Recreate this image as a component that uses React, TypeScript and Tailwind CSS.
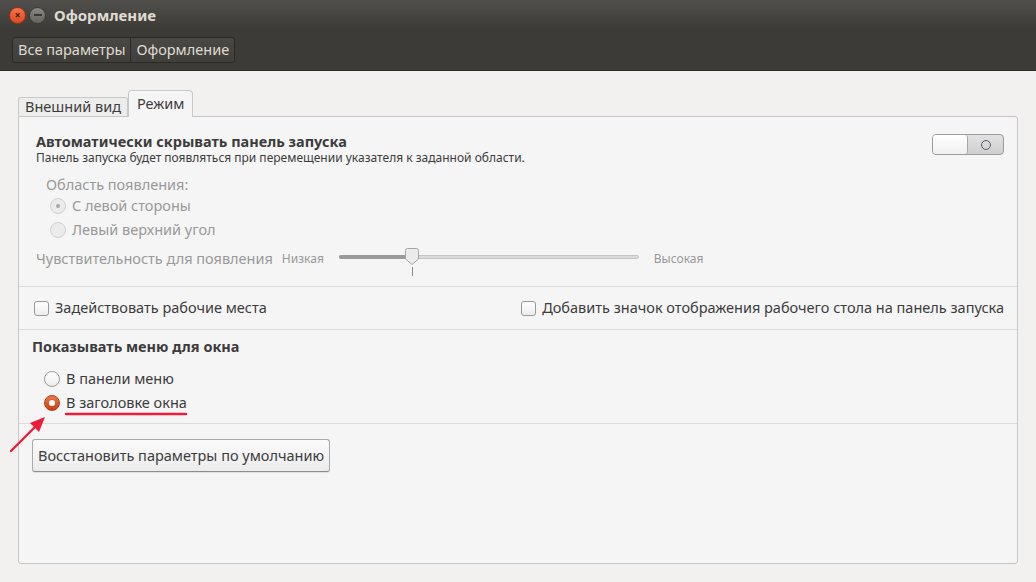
import React from 'react';

const font = { fontFamily: '"Noto Sans", "Open Sans", sans-serif' };

const Radio: React.FC<{ checked?: boolean; disabled?: boolean; label: string; className?: string }> = ({ checked, disabled, label, className }) => {
  return (
    <div className={`flex items-center h-6 ${className ?? ''}`}>
      {checked && !disabled ? (
        <span className="w-4 h-4 rounded-full bg-gradient-to-b from-[#e8794a] to-[#c34113] border border-[#b3400f] flex items-center justify-center">
          <span className="w-1.5 h-1.5 rounded-full bg-white" />
        </span>
      ) : (
        <span
          className={`w-4 h-4 rounded-full border flex items-center justify-center ${
            disabled ? 'border-[#d0d0d0] bg-[#ececec]' : 'border-[#9a9a9a] bg-gradient-to-b from-white to-[#ececec]'
          }`}
        >
          {checked && <span className="w-1 h-1 rounded-full bg-[#a8a8a8]" />}
        </span>
      )}
      <span className={`ml-1.5 text-[14.5px] ${disabled ? 'text-[#999999]' : 'text-[#3c3c3c]'}`}>{label}</span>
    </div>
  );
};

const Checkbox: React.FC<{ label: string }> = ({ label }) => (
  <label className="flex items-center">
    <span className="w-[15px] h-[15px] rounded-[3px] border border-[#9a9a9a] bg-gradient-to-b from-white to-[#ededed]" />
    <span className="ml-1.5 text-[14.5px] text-[#3c3c3c]">{label}</span>
  </label>
);

export default function App() {
  return (
    <div className="relative w-[1036px] h-[582px] bg-[#f2f1f0] overflow-hidden" style={font}>
      {/* Title bar */}
      <div className="h-[30px] bg-gradient-to-b from-[#514f4b] to-[#3c3b37] flex items-center pl-[9px]">
        <span className="w-[17px] h-[17px] rounded-full bg-gradient-to-b from-[#f3744a] to-[#dc4a1e] border border-[#9c3013] flex items-center justify-center text-[#3a1a10] text-[10px] leading-none font-bold">
          ×
        </span>
        <span className="ml-[3px] w-[17px] h-[17px] rounded-full bg-gradient-to-b from-[#8a8883] to-[#65635e] border border-[#3b3a37] flex items-center justify-center">
          <span className="w-2 h-[2px] bg-[#3a3935]" />
        </span>
        <span className="ml-[8px] text-[15px] font-bold text-[#dfdbd2]">Оформление</span>
      </div>

      {/* Toolbar */}
      <div className="h-[41px] bg-[#3c3b37] border-b border-[#2d2c29] flex items-center pl-3">
        <div className="flex h-[26px] rounded-[3px] border border-[#2a2926] bg-gradient-to-b from-[#4a4844] to-[#413f3b] text-[14.5px] text-[#dfdbd2]">
          <span className="px-[5px] flex items-center border-r border-[#2a2926]">Все параметры</span>
          <span className="px-[5px] flex items-center">Оформление</span>
        </div>
      </div>

      {/* Tabs */}
      <div className="flex items-end pl-[18px] mt-[18px] h-[27px]">
        <div className="h-[19px] px-[6px] flex items-center border border-b-0 border-[#c8c8c8] rounded-t-[3px] bg-[#ededeb] text-[14.5px] text-[#3c3c3c]">
          Внешний вид
        </div>
        <div className="h-[27px] px-[8px] flex items-center border border-b-0 border-[#c8c8c8] rounded-t-[4px] bg-[#f5f5f5] text-[14.5px] text-[#3c3c3c] -mb-px relative z-10">
          Режим
        </div>
      </div>

      {/* Panel */}
      <div className="mx-[18px] w-[1000px] h-[448px] border border-[#c8c8c8] rounded-b-[3px] rounded-tr-[3px] bg-[#f5f5f5]">
        {/* Launcher autohide */}
        <div className="flex justify-between pl-[17px] pr-[13px] pt-[14px]">
          <div>
            <div className="text-[14.5px] font-bold text-[#3c3c3c] leading-[20px]">Автоматически скрывать панель запуска</div>
            <div className="text-[12px] text-[#3c3c3c] leading-[14px]">
              Панель запуска будет появляться при перемещении указателя к заданной области.
            </div>
          </div>
          <div className="mt-[3px] w-[72px] h-[21px] rounded-[4px] border border-[#9c9c9c] bg-gradient-to-b from-[#e2e2e2] to-[#cfcfcf] flex">
            <span className="w-[35px] h-full rounded-[3px] bg-gradient-to-b from-white to-[#f0f0f0] border-r border-[#a8a8a8]" />
            <span className="flex-1 flex items-center justify-center">
              <span className="w-[10px] h-[10px] rounded-full border border-[#5a5a6a]" />
            </span>
          </div>
        </div>

        <div className="pl-[27px] pt-[9px] text-[14.5px] text-[#999999] leading-[20px]">Область появления:</div>
        <Radio disabled checked label="С левой стороны" className="pl-[31px]" />
        <Radio disabled label="Левый верхний угол" className="pl-[31px]" />

        <div className="flex items-center pl-[17px] mt-[4px] h-[26px]">
          <span className="text-[14.5px] text-[#999999]">Чувствительность для появления</span>
          <span className="ml-[9px] text-[12px] text-[#999999]">Низкая</span>
          <div className="relative ml-[15px] w-[300px] h-[26px]">
            <div className="absolute top-[9px] left-0 right-0 h-[4px] rounded-full bg-[#dcdcdc] border border-[#c4c4c4]" />
            <div className="absolute top-[9px] left-0 w-[74px] h-[4px] rounded-full bg-[#9a9a9a]" />
            <svg className="absolute left-[66px] top-[2px]" width="14" height="18" viewBox="0 0 14 18">
              <path d="M2.5 0.5 H11.5 A2 2 0 0 1 13.5 2.5 V11 L7 16.5 L0.5 11 V2.5 A2 2 0 0 1 2.5 0.5 Z" fill="#ebebeb" stroke="#a5a5a5" />
            </svg>
            <div className="absolute left-[73px] top-[21px] w-px h-[9px] bg-[#8a8a8a]" />
          </div>
          <span className="ml-[15px] text-[12px] text-[#999999]">Высокая</span>
        </div>

        <div className="mt-[14px] border-t border-[#dcdcdc]" />
        <div className="flex justify-between items-center h-[42px] pl-[15px] pr-[13px]">
          <Checkbox label="Задействовать рабочие места" />
          <Checkbox label="Добавить значок отображения рабочего стола на панель запуска" />
        </div>
        <div className="border-t border-[#dcdcdc]" />

        <div className="pl-[13px] pt-[6px] text-[14.5px] font-bold text-[#3c3c3c] leading-[20px]">Показывать меню для окна</div>
        <Radio label="В панели меню" className="pl-[25px] mt-[11px]" />
        <Radio checked label="В заголовке окна" className="pl-[25px]" />

        <div className="mt-[8px] border-t border-[#dcdcdc]" />
        <button className="ml-[13px] mt-[15px] h-[33px] px-[5px] rounded-[3px] border border-[#a9a9a9] border-b-[#8c8c8c] bg-gradient-to-b from-[#fbfbfb] to-[#ececec] text-[14.5px] text-[#3c3c3c] shadow-[0_1px_0_rgba(0,0,0,0.08)]">
          Восстановить параметры по умолчанию
        </button>
      </div>

      {/* Annotation: red underline and arrow */}
      <svg className="absolute left-0 top-0 pointer-events-none" width="1036" height="582" viewBox="0 0 1036 582">
        <line x1="66" y1="414" x2="186" y2="414" stroke="#ee1c3b" strokeWidth="2.4" strokeLinecap="round" />
        <line x1="11" y1="451" x2="36" y2="426" stroke="#ee1c3b" strokeWidth="2.4" strokeLinecap="round" />
        <path d="M45 417 L30 423 L39 432 Z" fill="#ee1c3b" />
      </svg>
    </div>
  );
}
